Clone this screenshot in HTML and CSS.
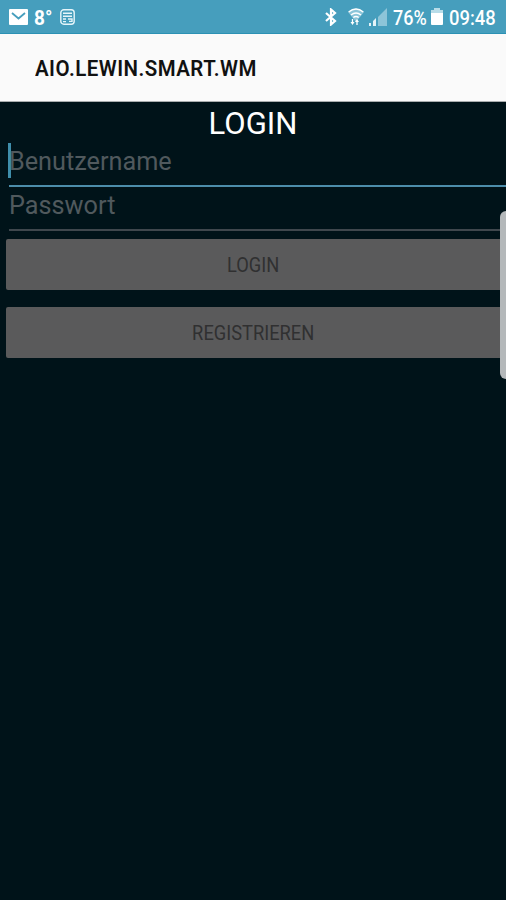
FILE: index.html
```html
<!DOCTYPE html>
<html lang="de">
<head>
<meta charset="utf-8">
<title>AIO.LEWIN.SMART.WM</title>
<link rel="stylesheet" href="styles.css">
</head>
<body>
<div class="status">
  <svg class="mail" width="19" height="16" viewBox="0 0 19 16"><rect width="19" height="16" rx="1" fill="#fff"/><path d="M3 4l6.5 5.5L16 4" fill="none" stroke="#469ebd" stroke-width="1.8"/></svg>
  <span class="temp">8°</span>
  <svg class="news" width="15" height="16" viewBox="0 0 15 16" fill="none" stroke="#e6f5fa" stroke-width="1.4"><rect x=".8" y=".8" width="13.4" height="14.4" rx="3"/><path d="M3 4.2h9M3 7.2h9M3 10h3M3 12.6h3M8 10h4v2.4H9"/></svg>
  <svg class="bluetooth" width="12" height="18" viewBox="0 0 12 18" fill="none" stroke="#fff" stroke-width="2.2"><path d="M1 5l9 8-4 3.5v-15L10 5l-9 8"/></svg>
  <svg class="wifi" width="16" height="18" viewBox="0 0 16 18"><path d="M0 4Q8-3 16 4L8 14z" fill="#8bc5d9"/><path d="M.7 4Q8-2 15.3 4M3 7q5-4 10 0M5.3 9.5q2.7-2 5.4 0" fill="none" stroke="#fff" stroke-width="1.5"/><path d="M2.5 14L4.5 17 6.500 14zM7 14l2-3 2 3z" fill="#fff"/><path d="M4.500 11v4M9 13v4" stroke="#fff" stroke-width="1.300"/></svg>
  <svg class="signal" width="18" height="18" viewBox="0 0 18 18"><path d="M18 0v18H9V9z" fill="#8dc4d8"/><path d="M0 18v-3h2v3zM4 18v-5l3-3v8z" fill="#e4f3f8"/></svg>
  <span class="percent">76%</span>
  <svg class="battery" width="12" height="17" viewBox="0 0 12 17"><path d="M3 0h6v2h3v4H0V2h3z" fill="#b8dce8"/><path d="M0 5h12v11a1 1 0 0 1-1 1H1a1 1 0 0 1-1-1z" fill="#fff"/></svg>
  <span class="clock">09:48</span>
</div>
<header class="appbar"><h1 class="title">AIO.LEWIN.SMART.WM</h1></header>
<main class="content">
  <h2 class="heading">LOGIN</h2>
  <div class="field focused"><span class="caret"></span><span class="hint">Benutzername</span></div>
  <div class="field"><span class="hint">Passwort</span></div>
  <button class="button"><span class="label">LOGIN</span></button>
  <button class="button"><span class="label">REGISTRIEREN</span></button>
  <div class="edge-handle"></div>
</main>
</body>
</html>
```
FILE: styles.css
```css
* { box-sizing: border-box; }
body {
  margin: 0;
  width: 506px;
  height: 900px;
  overflow: hidden;
  display: flex;
  flex-direction: column;
  background: #001319;
  font-family: Roboto, "Liberation Sans", sans-serif;
}
svg { flex: none; }
.status {
  height: 34px;
  flex: none;
  display: flex;
  align-items: center;
  padding-left: 9px;
  background: #469ebd;
  border-bottom: 1px solid #2b91b4;
  color: #fff;
  font-size: 20px;
  white-space: nowrap;
}
.status span { transform-origin: left; line-height: 34px; padding-top: 2px; }
.temp { width: 19px; margin-left: 6px; font-weight: 700; transform: scaleX(.95); }
.news { margin-left: 7px; }
.bluetooth { margin-left: 250px; }
.wifi { margin-left: 11px; }
.signal { margin-left: 5px; }
.percent { width: 34px; margin-left: 6px; font-weight: 500; transform: scaleX(.9); }
.battery { margin-left: 4px; }
.clock { width: 46px; margin-left: 6px; font-weight: 500; transform: scaleX(.92); }
.appbar {
  height: 68px;
  flex: none;
  padding: 1px 0 0 35px;
  background: #fafafa;
  border-bottom: 1px solid #a9adae;
}
.title {
  margin: 0;
  width: max-content;
  color: #111;
  font-size: 22px;
  line-height: 68px;
  font-weight: 600;
  letter-spacing: .5px;
  transform: scaleX(.93);
  transform-origin: left;
}
.content {
  position: relative;
  flex: 1;
  display: flex;
  flex-direction: column;
}
.heading {
  margin: 0;
  height: 41px;
  color: #fff;
  font-size: 32px;
  line-height: 43px;
  font-weight: 400;
  text-align: center;
  transform: scaleX(.97);
}
.field {
  position: relative;
  height: 44px;
  margin-left: 9px;
  border-bottom: 2px solid #3f474d;
  color: #50595d;
  font-size: 25px;
  line-height: 37px;
}
.focused { border-bottom-color: #4c8daa; }
.hint { display: inline-block; transform: scaleX(1.01); transform-origin: left; }
.caret {
  position: absolute;
  left: -1px;
  top: 0;
  width: 3px;
  height: 35px;
  background: #3f8eab;
}
.button {
  height: 51px;
  margin: 8px 0 0 6px;
  padding: 0 6px 0 0;
  border: 0;
  border-radius: 2px 0 0 2px;
  background: #5a5a5b;
  color: #303031;
  font: 400 21px Roboto, sans-serif;
}
.button + .button { margin-top: 17px; }
.label { display: inline-block; transform: scaleX(.87); }
.edge-handle {
  position: absolute;
  top: 109px;
  right: 0;
  width: 6px;
  height: 168px;
  border-radius: 6px 0 0 6px;
  background: #b4b8ba;
}
```
